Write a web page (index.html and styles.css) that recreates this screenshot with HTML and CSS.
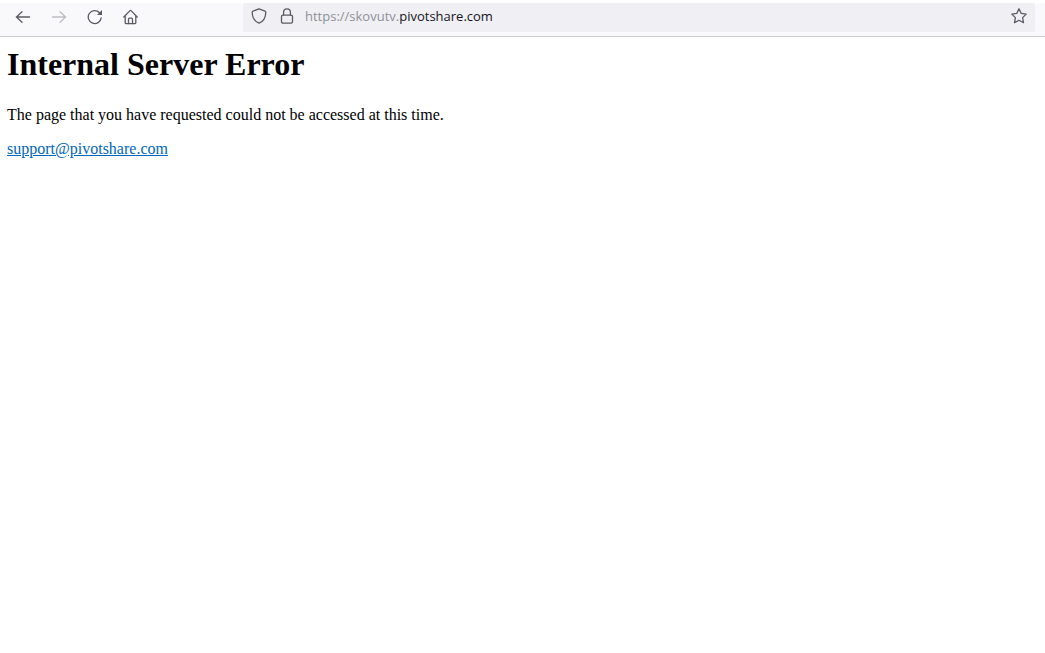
FILE: index.html
```
<!DOCTYPE html>
<html lang="en">
<head>
    <meta charset="UTF-8">
    <meta name="viewport" content="width=device-width, initial-scale=1.0">
    <title>Internal Server Error</title>
    <link rel="stylesheet" href="styles.css">
</head>
<body>
    <header class="toolbar">
        <nav class="nav-buttons">
            <button type="button" aria-label="Back">
                <svg viewBox="0 0 16 16"><path d="M14.6 8H1.3M7 2.7L1.5 8L7 13.3"/></svg>
            </button>
            <button type="button" aria-label="Forward" disabled>
                <svg viewBox="0 0 16 16"><path d="M1.4 8h13.3M9 2.7L14.5 8L9 13.3"/></svg>
            </button>
            <button type="button" aria-label="Reload">
                <svg viewBox="0 0 16 16">
                    <path d="M14.2 8.9A6.5 6.5 0 1 1 12.4 3.5"/>
                    <path class="solid" d="M15 1v4.6q0 .5-.5.5H10z"/>
                </svg>
            </button>
            <button type="button" aria-label="Home">
                <svg viewBox="0 0 16 16">
                    <path d="M.8 8L7 1.6q.5-.5 1 0L14.200 8M2.200 7v6.700q0 1 1 1h8.600q1 0 1-1V7"/>
                    <path d="M5.500 14.500v-4.300q0-1 1-1h2q1 0 1 1v4.300"/>
                </svg>
            </button>
        </nav>

        <form class="address-bar">
            <button type="button" aria-label="Tracking protection">
                <svg viewBox="0 0 16 16"><path d="M8 .8l6 2.3q.8.3.8 1.1C14.7 9.4 11.8 13.7 8 15.2C4.2 13.7 1.3 9.4 1.2 4.2q0-.8.8-1.1z"/></svg>
            </button>
            <button type="button" aria-label="Connection secure">
                <svg viewBox="0 0 16 16">
                    <rect x="2.500" y="7.200" width="11" height="8" rx="1.400"/>
                    <path d="M4.600 7V4.200a3.400 3.400 0 0 1 6.800 0V7"/>
                </svg>
            </button>
            <label for="address">https://skovutv.</label>
            <input type="text" id="address" value="pivotshare.com" spellcheck="false">
            <button type="button" class="bookmark" aria-label="Bookmark this page">
                <svg viewBox="0 0 16 16"><path d="M8 .8l2.200 4.600 5 .7-3.600 3.500.9 5.100L8 12.300l-4.500 2.400.9-5.100L.8 6.100l5-.7z"/></svg>
            </button>
        </form>
    </header>

    <main>
        <h1>Internal Server Error</h1>
        <p>The page that you have requested could not be accessed at this time.</p>
        <p><a href="mailto:support@pivotshare.com">support@pivotshare.com</a></p>
    </main>
</body>
</html>
```
FILE: styles.css
```
* {
    box-sizing: border-box;
}

body {
    margin: 0;
    background-color: #fff;
    color: #000;
    font-family: "Liberation Serif", "Times New Roman", serif;
    font-size: 16px;
}

.toolbar {
    display: flex;
    align-items: flex-start;
    gap: 96px;
    margin-top: 3px;
    padding: 0 10px 4px 7px;
    background-color: #f9f9fb;
    border-bottom: 1px solid #ccccd1;
}

.nav-buttons {
    display: flex;
    gap: 4px;
}

button {
    display: flex;
    align-items: center;
    justify-content: center;
    width: 32px;
    height: 28px;
    padding: 0;
    border: none;
    background: none;
    color: #5b5b66;
}

button:disabled {
    color: #bdbdc3;
}

svg {
    width: 16px;
    height: 16px;
    fill: none;
    stroke: currentColor;
    stroke-width: 1.3;
    stroke-linecap: round;
    stroke-linejoin: round;
}

svg .solid {
    fill: currentColor;
    stroke: none;
}

.address-bar {
    display: flex;
    flex: 1;
    align-items: center;
    height: 29px;
    padding: 0 0 3px 2px;
    border-radius: 2px;
    background-color: #f0f0f4;
    font-family: "Open Sans", "Segoe UI", sans-serif;
    font-size: 13px;
}

.address-bar button {
    width: 28px;
    height: 26px;
}

.address-bar label {
    margin-left: 4px;
    color: #8f8f9a;
}

.address-bar input {
    flex: 1;
    min-width: 0;
    padding: 0;
    border: none;
    outline: none;
    background: none;
    color: #15141a;
    font: inherit;
}

.address-bar .bookmark {
    width: 32px;
}

main {
    padding: 9px 7px;
}

h1 {
    margin: 0;
    font-size: 32px;
    line-height: 36px;
}

p {
    margin: 16px 0;
    line-height: 18px;
}

h1 + p {
    margin-top: 24px;
}

a {
    color: #0066bb;
}
```
